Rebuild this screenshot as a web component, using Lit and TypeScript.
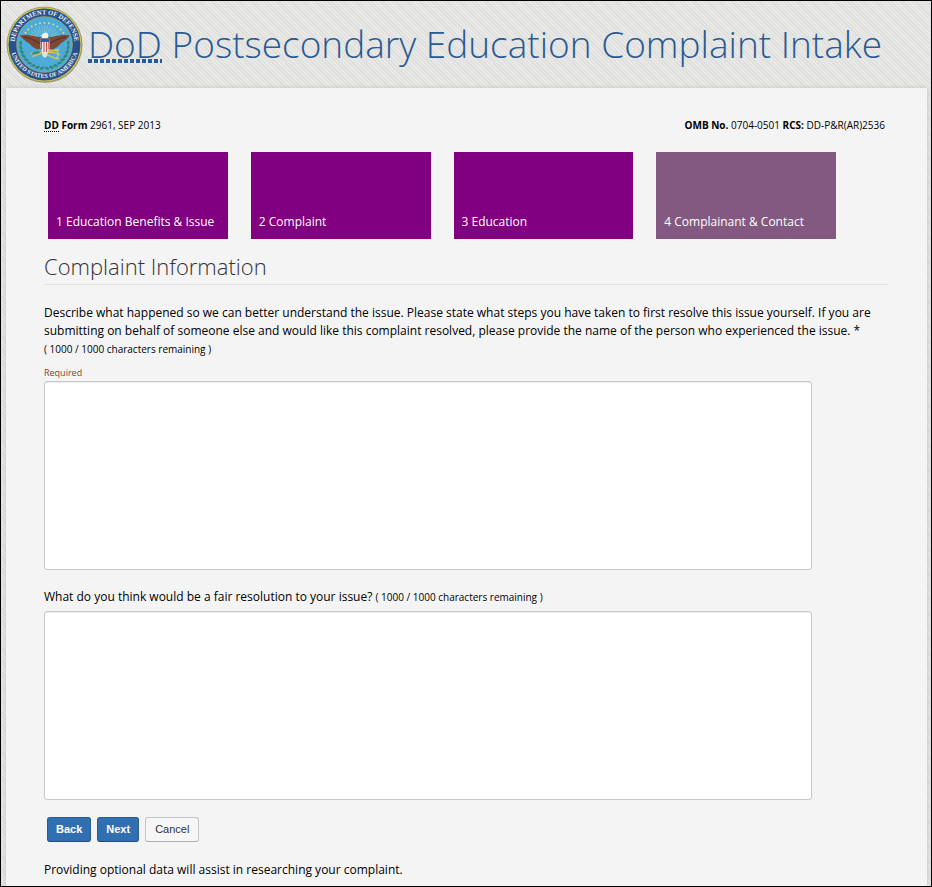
import { LitElement, html, css, svg } from "lit";
import { customElement, state } from "lit/decorators.js";
import { classMap } from "lit/directives/class-map.js";

const LIMIT = 1000;

@customElement("dod-seal")
class DodSeal extends LitElement {
  static styles = css`
    :host { display: block; flex: none; width: 77px; height: 77px; }
    svg { display: block; width: 100%; height: 100%; }
    .ring { font: 700 13px "Liberation Serif", serif; fill: #eef1f4; }
    .small { font-size: 12px; }
  `;

  render() {
    const stars = Array.from({ length: 13 }, (_, i) => {
      const a = ((198 + i * 12) * Math.PI) / 180;
      return svg`<circle cx=${76 + 43 * Math.cos(a)} cy=${73 + 40 * Math.sin(a)} r="2"></circle>`;
    });
    const rays = Array.from({ length: 13 }, (_, i) => {
      const a = ((204 + i * 11) * Math.PI) / 180;
      return svg`<path d=${`M${76 + 15 * Math.cos(a)} ${66 + 14 * Math.sin(a)}L${76 + 32 * Math.cos(a)} ${68 + 30 * Math.sin(a)}`}></path>`;
    });
    const leaves = [-1, 1].flatMap((s) =>
      Array.from({ length: 9 }, (_, i) => {
        const a = ((84 - i * 11) * Math.PI) / 180;
        const x = 76 + s * 47 * Math.cos(a);
        const y = 76 + 47 * Math.sin(a);
        return svg`<ellipse cx=${x} cy=${y} rx="4.600" ry="2.600" transform=${`rotate(${s * (30 - i * 14)} ${x} ${y})`}></ellipse>`;
      })
    );
    return html`
      <svg viewBox="0 0 152 152" role="img" aria-label="Department of Defense seal">
        <defs>
          <path id="top" d="M17.700 88A59.500 59.500 0 1 1 134.300 88"></path>
          <path id="bottom" d="M9.500 86A67.500 67.500 0 0 0 142.500 86"></path>
        </defs>
        <circle cx="77" cy="78" r="74" fill="#8c8c88" opacity=".6"></circle>
        <circle cx="76" cy="76" r="74" fill="#d8c650" stroke="#676b43" stroke-width="1"></circle>
        <circle cx="76" cy="76" r="71" fill="#28528c"></circle>
        <circle cx="76" cy="76" r="55" fill="#4dabda" stroke="#a9a55c" stroke-width="1.500"></circle>
        <text class="ring"><textPath href="#top" startOffset="50%" text-anchor="middle">DEPARTMENT OF DEFENSE</textPath></text>
        <text class="ring small"><textPath href="#bottom" startOffset="50%" text-anchor="middle">UNITED STATES OF AMERICA</textPath></text>
        <g fill="#e4db68">${stars}</g>
        <g stroke="#8ecbd0" stroke-width="1.400">${rays}</g>
        <g fill="#36876f">${leaves}</g>
        <path d="M48 94Q70 89 104 93M52 100Q72 90 103 86M72 92L98 104" stroke="#d9c552" stroke-width="2.600" fill="none"></path>
        <path d="M96 87l10-3-4 8zM96 104l9 2-3-8zM100 93l8 2-7 4z" fill="#d9c552"></path>
        <path d="M50 94q10-7 19-3-8 6-19 3z" fill="#3c8a62"></path>
        <path d="M71 62C60 62 50 55 27 58C34 66 40 70 46 74Q52 82 62 86L69 84L85 84L92 86Q102 82 108 74C114 70 120 66 126 58C104 55 93 62 82 62Z" fill="#7b4935"></path>
        <path d="M36 61Q52 64 66 74M86 74Q101 64 118 61" stroke="#563326" stroke-width="2" fill="none"></path>
        <path d="M70 86h14l-3 13-4 3-5-3z" fill="#e5e1d2"></path>
        <path d="M71 63Q69 55 74 54Q80 50 84 57L82 64Z" fill="#f6f5ef"></path>
        <path d="M72 56l-6 2 5 2z" fill="#e5c64a"></path>
        <path d="M68 64H86V82Q84 90 77 93Q70 90 68 82Z" fill="#f4ede9"></path>
        <path d="M68 64H86V71H68Z" fill="#345b9c"></path>
        <path d="M70 71v15M75 71v20M80 71v20M84.500 71v14" stroke="#c65358" stroke-width="2.200"></path>
      </svg>
    `;
  }
}

@customElement("app-root")
class AppRoot extends LitElement {
  static styles = css`
    :host {
      display: flex;
      flex-direction: column;
      box-sizing: border-box;
      min-height: 100vh;
      border: 1px solid #000;
      padding: 0 4px 0 5px;
      font: 12px/18px "Open Sans", "Noto Sans", sans-serif;
      color: #000;
      background:
        linear-gradient(45deg, transparent 40%, #ffffff60 40% 60%, transparent 60%) 0 0 / 4px 4px,
        linear-gradient(45deg, #00000005 25%, transparent 25% 50%, #00000005 50% 75%, transparent 75%) 0 0 / 13px 13px,
        #e3e3e2;
    }
    * { box-sizing: border-box; }
    .banner { display: flex; align-items: center; gap: 5px; height: 87px; }
    h1 { margin: 0; padding-bottom: 2px; font-weight: 300; font-size: 37px; line-height: 50px; color: #2a5a94; white-space: nowrap; }
    abbr { text-decoration: none; }
    .org {
      display: inline-block;
      background: repeating-linear-gradient(90deg, #2a5a94 0 4px, transparent 4px 6px) 0 40px / 100% 4px no-repeat;
    }
    .sheet { flex: 1; padding: 28px 38px 7px; background: #f4f4f4; box-shadow: 0 0 5px #00000026; }
    .meta { display: flex; justify-content: space-between; padding-right: 4px; font-size: 10px; }
    .meta b { font-weight: 700; }
    .meta abbr { background: repeating-linear-gradient(90deg, #000 0 1px, transparent 1px 2px) 0 100% / 100% 1px no-repeat; }
    .steps { display: flex; gap: 23px; margin: 18px 0 0; padding: 0 53px 0 4px; list-style: none; }
    .steps li { flex: 1; }
    .step {
      display: flex;
      align-items: flex-end;
      height: 87px;
      padding: 8px;
      background: #800080;
      color: #fff;
      text-decoration: none;
      white-space: nowrap;
    }
    .pending { background: #835982; }
    h2 {
      margin: 12px 0 19px;
      padding-bottom: 3px;
      border-bottom: 1px solid #e4e4e4;
      font-weight: 300;
      font-size: 22px;
      line-height: 30px;
      color: #333;
    }
    label { display: block; }
    small { font-size: 10px; }
    .count { display: block; }
    .error { margin-top: 6px; font-size: 9px; line-height: 17px; color: #a8322f; }
    textarea {
      display: block;
      width: 100%;
      max-width: 768px;
      height: 189px;
      margin: 0;
      padding: 4px 6px;
      border: 1px solid #c8c8c8;
      border-radius: 3px;
      background: #fff;
      box-shadow: inset 0 1px 1px #00000013;
      font: inherit;
      resize: none;
      outline: none;
    }
    .resolution { margin-top: 18px; }
    .resolution textarea { margin-top: 5px; }
    .actions { display: flex; gap: 6px; margin: 17px 0 19px; padding-left: 3px; }
    button {
      height: 25px;
      padding: 0 9px 1px;
      border: 1px solid #c4c4c4;
      border-bottom-color: #b0b0b0;
      border-radius: 3px;
      background: #f6f6f6;
      color: #333;
      font: 11px/16px "Liberation Sans", Arial, sans-serif;
    }
    .primary {
      padding: 0 8px 1px;
      border-color: #285c96;
      border-bottom-color: #1f4a7c;
      background: #326fb0;
      color: #fff;
      font-weight: 700;
    }
    p { margin: 0; }
  `;

  @state() private issue = "";
  @state() private resolution = "";

  private steps = ["Education Benefits & Issue", "Complaint", "Education", "Complainant & Contact"];

  private remaining(text: string) {
    return `( ${LIMIT - text.length} / ${LIMIT} characters remaining )`;
  }

  render() {
    return html`
      <header class="banner">
        <dod-seal></dod-seal>
        <h1><abbr class="org" title="Department of Defense">DoD</abbr> Postsecondary Education Complaint Intake</h1>
      </header>
      <main class="sheet">
        <div class="meta">
          <span><b><abbr title="Department of Defense">DD</abbr> Form</b> 2961, SEP 2013</span>
          <span><b>OMB No.</b> 0704-0501 <b>RCS:</b> DD-P&amp;R(AR)2536</span>
        </div>
        <ol class="steps">
          ${this.steps.map((name, i) => html`
            <li><a href="#step-${i + 1}" class=${classMap({ step: true, pending: i === 3 })}>${i + 1} ${name}</a></li>
          `)}
        </ol>
        <h2>Complaint Information</h2>
        <section>
          <label for="issue">
            Describe what happened so we can better understand the issue. Please state what steps you have taken to first
            resolve this issue yourself. If you are submitting on behalf of someone else and would like this complaint
            resolved, please provide the name of the person who experienced the issue. *
            <small class="count">${this.remaining(this.issue)}</small>
          </label>
          <div class="error" id="issue-error">Required</div>
          <textarea id="issue" maxlength=${LIMIT} aria-describedby="issue-error" .value=${this.issue}
            @input=${(e: Event) => (this.issue = (e.target as HTMLTextAreaElement).value)}></textarea>
        </section>
        <section class="resolution">
          <label for="resolution">
            What do you think would be a fair resolution to your issue? <small>${this.remaining(this.resolution)}</small>
          </label>
          <textarea id="resolution" maxlength=${LIMIT} .value=${this.resolution}
            @input=${(e: Event) => (this.resolution = (e.target as HTMLTextAreaElement).value)}></textarea>
        </section>
        <div class="actions">
          <button type="button" class="primary">Back</button>
          <button type="button" class="primary">Next</button>
          <button type="button">Cancel</button>
        </div>
        <p>Providing optional data will assist in researching your complaint.</p>
      </main>
    `;
  }
}
